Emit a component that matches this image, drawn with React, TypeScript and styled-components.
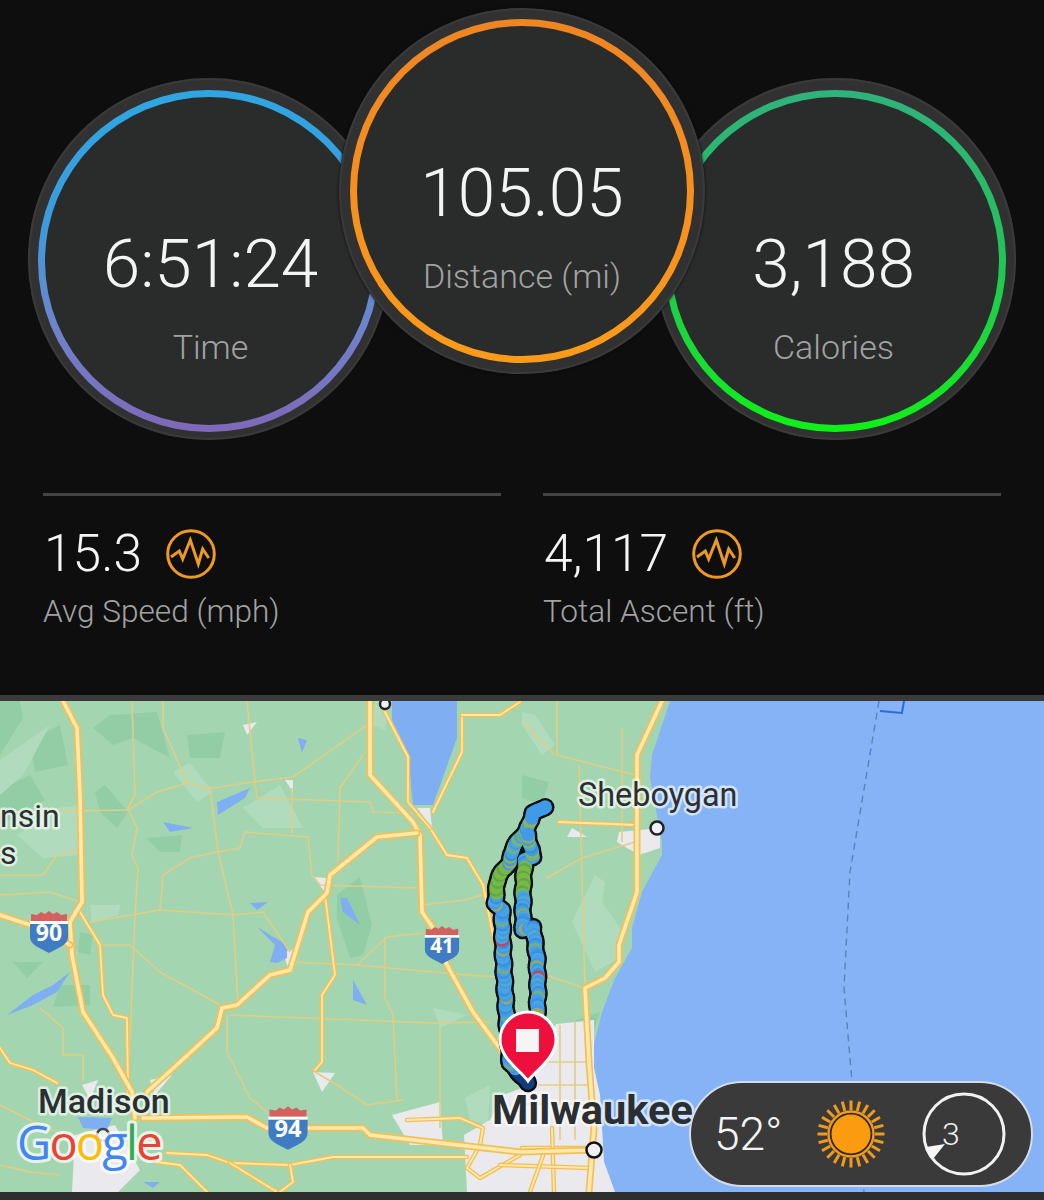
import React from 'react'
import styled, {createGlobalStyle} from 'styled-components'

const GlobalStyle = createGlobalStyle`
  html, body {
    margin: 0;
    background: #0e0e0e;
  }
  body {
    font-family: Roboto, "Liberation Sans", sans-serif;
  }
`

const Page = styled.div`
  width: 1044px;
  height: 1200px;
  background: #0e0e0e;
  display: flex;
  flex-direction: column;
  overflow: hidden;
`

const Summary = styled.section`
  height: 695px;
  flex: none;
`

const Gauges = styled.div`
  display: flex;
  align-items: flex-start;
  padding: 8px 0 0 28px;
`

const Gauge = styled.div<{$main?: boolean}>`
  width: ${p => (p.$main ? 366 : 362)}px;
  height: ${p => (p.$main ? 366 : 362)}px;
  box-sizing: border-box;
  flex: none;
  padding: ${p => (p.$main ? '11px' : '12px 10px 8px')};
  border-radius: 50%;
  background: #313131;
  position: relative;
  z-index: ${p => (p.$main ? 2 : 1)};
  margin: ${p => (p.$main ? '0 -51px' : '70px 0 0')};
  box-shadow: inset 0 0 0 2px #3a3a3a${p => (p.$main ? ', 0 0 3px #0a0a0a' : '')};
`

const Ring = styled.div<{$colors: string}>`
  height: 100%;
  box-sizing: border-box;
  padding: 7px;
  border-radius: 50%;
  background: linear-gradient(180deg, ${p => p.$colors});
`

const Face = styled.div<{$main?: boolean; $nudge?: number}>`
  height: 100%;
  box-sizing: border-box;
  border-radius: 50%;
  background: #2a2b2b;
  display: flex;
  flex-direction: column;
  align-items: center;
  justify-content: center;
  padding-top: ${p => (p.$main ? 66 : 68)}px;
  padding-left: ${p => Math.max(p.$nudge || 0, 0)}px;
  padding-right: ${p => Math.max(-(p.$nudge || 0), 0)}px;
`

const GaugeValue = styled.div`
  font-size: 67.5px;
  line-height: 82px;
  font-weight: 300;
  color: #f4f4f4;
`

const GaugeLabel = styled.div`
  font-size: 34px;
  line-height: 42px;
  margin-top: 21px;
  font-weight: 300;
  color: #a2a2a2;
`

const Stats = styled.div`
  display: grid;
  grid-template-columns: 458px 458px;
  column-gap: 42px;
  margin: 53px 0 0 43px;
`

const Stat = styled.div`
  border-top: 3px solid #444;
  padding-top: 29px;
`

const StatTop = styled.div`
  display: flex;
  align-items: center;
  gap: 24px;
  padding-left: 1px;
  height: 60px;
  margin-top: -1px;
`

const StatValue = styled.div`
  font-size: 51.5px;
  line-height: 60px;
  font-weight: 300;
  color: #f4f4f4;
`

const StatLabel = styled.div`
  font-size: 31.6px;
  line-height: 38px;
  margin-top: 9px;
  font-weight: 300;
  color: #a2a2a2;
`

const MapFrame = styled.section`
  position: relative;
  flex: none;
  height: 491px;
  border-top: 6px solid #3a3a3a;
  border-bottom: 8px solid #2e2e2e;
`

const MapCanvas = styled.svg`
  display: block;
  width: 1044px;
  height: 491px;
`

const PlaceName = styled.text<{$size: number; $weight: number}>`
  font-family: Roboto, "Liberation Sans", sans-serif;
  font-size: ${p => p.$size}px;
  font-weight: ${p => p.$weight};
  fill: #2b2f33;
  stroke: rgba(255, 255, 255, 0.65);
  stroke-width: 5px;
  stroke-linejoin: round;
  paint-order: stroke;
`

const ShieldNumber = styled.text`
  font-family: "Open Sans", Roboto, sans-serif;
  font-size: 23px;
  font-weight: 700;
  fill: #fff;
  text-anchor: middle;
`

const GoogleMark = styled.text`
  font-family: "Open Sans", Roboto, sans-serif;
  font-size: 47px;
  font-weight: 500;
  letter-spacing: -1.8px;
  stroke: rgba(255, 255, 255, 0.75);
  stroke-width: 6px;
  stroke-linejoin: round;
  paint-order: stroke;
`

const Weather = styled.div`
  position: absolute;
  left: 689px;
  top: 380px;
  width: 344px;
  height: 106px;
  box-sizing: border-box;
  display: flex;
  align-items: center;
  padding: 0 23px;
  background: #3a3a3a;
  border: 2px solid #d5dce6;
  border-radius: 53px;
`

const Temperature = styled.div`
  width: 103px;
  font-size: 46px;
  line-height: 54px;
  font-weight: 300;
  color: #f4f4f4;
`

const Wind = styled.div`
  position: relative;
  margin-left: 37px;
  width: 84px;
  height: 84px;
`

const WindSpeed = styled.span`
  position: absolute;
  left: 20px;
  top: 23px;
  font-size: 32px;
  line-height: 38px;
  font-weight: 300;
  color: #f0f0f0;
`

type Pt = [number, number]

const pts = (list: Pt[]) => list.map(p => p.join(',')).join(' ')

const coast: Pt[] = [
  [670, 701], [652, 755], [650, 778], [662, 842], [662, 855], [642, 892], [632, 928], [632, 948],
  [615, 978], [602, 1012], [594, 1045], [594, 1068], [600, 1095], [604, 1162], [615, 1192], [1044, 1192], [1044, 701],
]

const lakes: Pt[][] = [
  [[392, 701], [457, 701], [457, 738], [433, 805], [413, 805], [408, 755], [392, 720]],
  [[217, 802], [250, 788], [245, 798], [218, 815]],
  [[163, 822], [193, 828], [170, 832]],
  [[298, 738], [307, 740], [302, 753]],
  [[250, 903], [268, 902], [257, 910]],
  [[257, 927], [287, 945], [287, 958], [277, 963], [270, 962], [275, 945]],
  [[340, 898], [347, 898], [360, 925], [343, 912]],
  [[353, 980], [367, 1005], [353, 1000]],
  [[7, 1015], [33, 995], [53, 985], [70, 972], [57, 992], [33, 1005]],
  [[78, 1117], [112, 1118], [107, 1130], [83, 1128]],
  [[143, 1182], [160, 1182], [153, 1188]],
]

const forest: Pt[][] = [
  [[93, 728], [110, 715], [157, 712], [170, 758], [133, 738], [113, 745]],
  [[95, 792], [105, 785], [128, 812], [117, 828], [100, 812]],
  [[187, 735], [225, 732], [220, 758], [190, 758]],
  [[147, 838], [182, 835], [180, 852], [160, 852]],
  [[337, 895], [360, 877], [372, 925], [363, 955], [350, 958], [337, 918]],
  [[0, 701], [20, 701], [23, 718], [0, 755]],
  [[30, 740], [60, 725], [68, 765], [35, 772]],
  [[0, 790], [30, 775], [45, 800], [0, 825]],
  [[13, 962], [43, 962], [27, 978]],
  [[80, 932], [93, 935], [90, 955], [78, 952]],
  [[60, 985], [90, 985], [90, 1005], [53, 1007]],
  [[522, 775], [549, 782], [542, 805], [522, 798]],
  [[576, 1020], [600, 1012], [590, 1040], [574, 1042]],
]

const meadow: Pt[][] = [
  [[0, 760], [50, 725], [23, 775], [0, 795]],
  [[243, 808], [280, 785], [303, 828], [263, 828]],
  [[173, 772], [190, 763], [213, 792], [197, 802]],
  [[57, 808], [80, 805], [80, 855], [43, 858], [17, 835]],
  [[433, 1008], [467, 1015], [440, 1028]],
  [[522, 712], [535, 715], [555, 745], [542, 755], [522, 725]],
  [[595, 875], [605, 882], [602, 902], [625, 935], [619, 958], [595, 972], [572, 922]],
  [[90, 905], [120, 905], [118, 915], [92, 922]],
  [[375, 701], [388, 701], [385, 730], [372, 725]],
  [[465, 1098], [490, 1085], [488, 1125], [470, 1120]],
]

const urban: Pt[][] = [
  [[392, 1115], [440, 1102], [443, 1145], [410, 1145]],
  [[75, 1135], [115, 1125], [140, 1170], [118, 1192], [72, 1192]],
  [[313, 1072], [335, 1073], [322, 1092]],
  [[243, 725], [257, 722], [247, 735]],
  [[285, 780], [293, 780], [293, 792]],
  [[313, 877], [327, 878], [325, 892]],
  [[283, 952], [293, 950], [288, 968]],
  [[417, 808], [430, 808], [432, 828]],
  [[619, 832], [660, 828], [660, 848], [639, 855], [617, 842]],
  [[567, 837], [572, 828], [587, 837]],
  [[503, 1095], [530, 1085], [542, 1050], [556, 1024], [594, 1020], [594, 1068], [600, 1095], [604, 1162], [615, 1192], [467, 1192], [464, 1135], [490, 1120]],
  [[82, 1085], [98, 1080], [90, 1100]],
  [[150, 1080], [172, 1075], [155, 1095]],
]

const highways: Pt[][] = [
  [[63, 701], [77, 728], [80, 795], [82, 902], [70, 922], [72, 955], [83, 1012], [113, 1058], [132, 1092], [135, 1118]],
  [[0, 915], [30, 925], [70, 945]],
  [[143, 1118], [247, 1117], [267, 1128], [363, 1128], [370, 1135], [520, 1152], [594, 1150]],
  [[370, 701], [370, 775], [413, 822], [420, 835], [422, 912], [433, 928], [447, 965], [473, 1012], [507, 1058]],
  [[147, 1092], [180, 1062], [217, 1028], [222, 1008], [237, 1005], [270, 975], [290, 970], [308, 912], [327, 893], [330, 875], [377, 837], [417, 833]],
  [[662, 701], [637, 755], [637, 892], [619, 945], [619, 962], [605, 978], [585, 988], [589, 1062], [594, 1128], [589, 1192]],
]

const majorRoads: Pt[][] = [
  [[325, 895], [335, 975], [322, 995], [322, 1062], [315, 1070]],
  [[80, 912], [100, 945], [103, 995], [113, 1015], [127, 1018], [128, 1092]],
  [[0, 1048], [10, 1063], [33, 1070], [57, 1083]],
  [[157, 1162], [180, 1165], [207, 1192]],
  [[430, 828], [447, 855], [467, 858], [483, 885], [495, 945]],
  [[385, 712], [408, 757], [408, 802], [430, 828]],
  [[462, 715], [462, 752], [433, 812]],
  [[462, 715], [500, 715], [520, 702]],
  [[167, 1153], [207, 1155], [230, 1163], [290, 1165], [333, 1157], [467, 1157]],
  [[230, 1163], [277, 1192]],
  [[290, 1165], [293, 1182], [280, 1192]],
  [[407, 1120], [460, 1118], [483, 1128], [480, 1145], [467, 1168], [480, 1178], [520, 1155]],
  [[559, 822], [637, 825]],
  [[522, 1148], [594, 1148]],
  [[552, 1128], [554, 1192]],
  [[500, 1165], [590, 1168]],
  [[530, 1192], [545, 1150]],
]

const lanes: Pt[][] = [
  [[132, 701], [135, 795], [128, 808], [137, 828], [132, 855], [138, 868], [135, 915], [128, 1085]],
  [[0, 812], [128, 810], [157, 792], [187, 783], [213, 788], [253, 782], [293, 777], [367, 725]],
  [[163, 701], [163, 728], [187, 782]],
  [[247, 701], [255, 782], [257, 798], [370, 802], [373, 812], [413, 813]],
  [[210, 788], [218, 852], [233, 915], [238, 1005]],
  [[90, 922], [160, 910], [233, 915], [263, 912], [290, 952]],
  [[160, 910], [163, 875], [190, 858], [217, 852], [240, 848], [245, 832], [308, 837], [312, 875], [320, 885], [417, 888]],
  [[292, 788], [292, 833]],
  [[340, 785], [338, 862]],
  [[363, 755], [340, 788]],
  [[100, 945], [130, 945], [160, 972], [220, 1005]],
  [[230, 1015], [433, 1023], [490, 1022]],
  [[293, 962], [357, 965], [387, 937], [423, 933]],
  [[357, 965], [467, 975], [500, 977]],
  [[385, 937], [385, 998], [393, 1015], [397, 1102]],
  [[227, 1015], [227, 1052], [250, 1098], [267, 1112]],
  [[315, 1072], [337, 1085], [367, 1105], [403, 1100]],
  [[440, 1028], [440, 1128]],
  [[0, 895], [50, 892], [80, 902]],
  [[40, 1008], [63, 1028], [63, 1055], [83, 1055], [83, 1082]],
  [[0, 875], [43, 875], [57, 855], [77, 850]],
  [[422, 905], [465, 900], [482, 895]],
  [[557, 701], [557, 755], [635, 775]],
  [[579, 765], [585, 988]],
  [[622, 728], [622, 842]],
  [[547, 878], [582, 858], [635, 842]],
  [[522, 722], [555, 755]],
  [[545, 975], [585, 988]],
  [[560, 1025], [560, 1140]],
  [[575, 1022], [575, 1140]],
  [[545, 1062], [592, 1062]],
  [[538, 1085], [592, 1085]],
  [[520, 1104], [596, 1104]],
  [[0, 1105], [40, 1125], [75, 1140]],
  [[0, 1165], [30, 1172], [60, 1175]],
]

const westTrail: Pt[] = [
  [528, 1083], [510, 1063], [507, 1023], [505, 990], [503, 950], [502, 910], [495, 903], [498, 877], [510, 862],
  [513, 847], [527, 830], [533, 813], [547, 806],
]

const eastTrail: Pt[] = [
  [533, 857], [525, 860], [523, 887], [523, 930], [533, 927], [537, 957], [538, 990], [537, 1017],
]

const linkTrail: Pt[] = [[533, 857], [527, 832]]

const trailColors = ['#3f9be8', '#4aa5e0', '#3890e0', '#45a0e8', '#4aa5e0', '#3f9be8', '#5aa8c8', '#3f9be8', '#4aa5e0', '#3890e0', '#45a0e8', '#7fae6a', '#4aa5e0', '#3f9be8', '#3890e0', '#4aa5e0', '#45a0e8', '#3f9be8', '#9aa860']

// walks a polyline and drops a dot every few pixels, the way the app paints a track
const sampleTrail = (line: Pt[], step: number) => {
  const out: Pt[] = []
  for (let i = 0; i < line.length - 1; i++) {
    const [ax, ay] = line[i]
    const [bx, by] = line[i + 1]
    const n = Math.max(1, Math.round(Math.hypot(bx - ax, by - ay) / step))
    for (let k = 0; k < n; k++) out.push([ax + ((bx - ax) * k) / n, ay + ((by - ay) * k) / n])
  }
  return out
}

const dotColor = (y: number, i: number) => {
  if (y > 1070) return '#123c7a'
  if (y < 818) return '#3f9be8'
  if (y > 865 && y < 895) return i % 3 ? '#7cb83c' : '#58a858'
  if (y < 860 && i % 4 === 0) return '#7cb85c'
  if (i % 61 === 60) return '#c8425a'
  return trailColors[i % trailColors.length]
}

// small repeatable wobble so the track edge stays lumpy like the GPS trace
const wobble = (i: number) => Math.sin(i * 0.9) * 0.7

const trailDots = [westTrail, eastTrail, linkTrail].flatMap((line, l) =>
  sampleTrail(line, 2.5).map(([x, y], i): {x: number; y: number; fill: string} => ({
    x: x + wobble(i + l * 3),
    y,
    fill: dotColor(y, i + l * 5),
  })),
)

const Track = () => (
  <g>
    {trailDots.map((d, i) => <circle key={i} cx={d.x} cy={d.y} r={9.2} fill='#0b0f14' />)}
    {trailDots.map((d, i) => <circle key={i} cx={d.x} cy={d.y} r={6.8} fill={d.fill} />)}
  </g>
)

const Road = ({line, edge, core}: {line: Pt[]; edge: number; core: number}) => (
  <g fill='none' strokeLinejoin='round' strokeLinecap='round'>
    <polyline points={pts(line)} stroke='#f4bf55' strokeWidth={edge} />
    <polyline points={pts(line)} stroke='#fde9ac' strokeWidth={core} />
  </g>
)

const Shield = ({x, y, scale, label}: {x: number; y: number; scale: number; label: string}) => (
  <g transform={`translate(${x} ${y}) scale(${scale})`}>
    <path d='M-18 -11V-18L-12 -17L-8 -20L-4 -18L0 -21L4 -18L8 -20L12 -17L18 -18V-11Z' fill='#d4615f' />
    <rect x={-19} y={-11} width={38} height={3} fill='#fff' />
    <path d='M-19 -8H19V5C19 13 9 16 0 21C-9 16 -19 13 -19 5Z' fill='#3f7cc4' />
    <ShieldNumber x={0} y={9}>{label}</ShieldNumber>
  </g>
)

const CityDot = ({x, y, r, ring}: {x: number; y: number; r: number; ring: string}) => (
  <circle cx={x} cy={y} r={r} fill='#eef0f4' stroke={ring} strokeWidth={2.5} />
)

const Pin = () => (
  <g>
    <path d='M528 1081C522 1072 500 1058 500 1040A28 28 0 0 1 556 1040C556 1058 534 1072 528 1081Z' fill='#ee0f3c' stroke='#fff' strokeWidth={3} />
    <rect x={516} y={1029} width={23} height={23} fill='#f6f4f4' />
  </g>
)

const MapArt = () => (
  <MapCanvas viewBox='0 701 1044 491'>
    <rect x={0} y={701} width={1044} height={491} fill='#a3d6b0' />
    {forest.map((p, i) => <polygon key={i} points={pts(p)} fill='#93cda6' />)}
    {meadow.map((p, i) => <polygon key={i} points={pts(p)} fill='#b0dcbd' />)}
    <polygon points={pts(coast)} fill='#86b3f5' />
    {urban.map((p, i) => <polygon key={i} points={pts(p)} fill='#e9e9ee' />)}
    {lakes.map((p, i) => <polygon key={i} points={pts(p)} fill='#80aef2' />)}
    {lanes.map((line, i) => (
      <polyline key={i} points={pts(line)} fill='none' stroke='#e2cd83' strokeWidth={1.6} strokeLinejoin='round' />
    ))}
    {majorRoads.map((line, i) => <Road key={i} line={line} edge={4.5} core={1.8} />)}
    {highways.map((line, i) => <Road key={i} line={line} edge={7} core={3.6} />)}
    <polyline points='879,701 850,872 844,988 852,1082 864,1192' fill='none' stroke='#5c80b8' strokeWidth={1.4} strokeDasharray='7 5' />
    <polyline points='880,711 902,713 904,701' fill='none' stroke='#2a6cd0' strokeWidth={2} />
    <CityDot x={385} y={704} r={5} ring='#222' />
    <CityDot x={657} y={828} r={6.5} ring='#222' />
    <CityDot x={594} y={1150} r={7.5} ring='#111' />
    <CityDot x={103} y={1135} r={6} ring='#444' />
    <Shield x={49} y={932} scale={1} label='90' />
    <Shield x={442} y={945} scale={0.9} label='41' />
    <Shield x={288} y={1128} scale={1.03} label='94' />
    <Track />
    <Pin />
    <PlaceName x={0} y={827} $size={32} $weight={400}>nsin</PlaceName>
    <PlaceName x={0} y={864} $size={32} $weight={400}>s</PlaceName>
    <PlaceName x={578} y={806} $size={32.4} $weight={400}>Sheboygan</PlaceName>
    <PlaceName x={38} y={1113} $size={34} $weight={500}>Madison</PlaceName>
    <PlaceName x={492} y={1124} $size={41.5} $weight={700}>Milwaukee</PlaceName>
    <GoogleMark x={17} y={1160}>
      <tspan fill='#4285f4'>G</tspan>
      <tspan fill='#ea4335'>o</tspan>
      <tspan fill='#fbbc05'>o</tspan>
      <tspan fill='#4285f4'>g</tspan>
      <tspan fill='#34a853'>l</tspan>
      <tspan fill='#ea4335'>e</tspan>
    </GoogleMark>
  </MapCanvas>
)

const PulseIcon = () => (
  <svg width={50} height={50} viewBox='0 0 50 50'>
    <circle cx={25} cy={25} r={23.3} fill='none' stroke='#ee9a22' strokeWidth={3} />
    <polyline points='5,28 13.3,22 16.7,30 24.3,11 32.3,35 36.7,20 42.7,29' fill='none' stroke='#ee9a22' strokeWidth={3} strokeLinejoin='miter' />
  </svg>
)

const rayAngles = Array.from({length: 24}, (_, i) => (i * 360) / 24)

const SunIcon = () => (
  <svg width={68} height={68} viewBox='-34 -34 68 68'>
    {rayAngles.map(a => (
      <line key={a} x1={0} y1={-24} x2={0} y2={-33.5} stroke='#f09a20' strokeWidth={3} transform={`rotate(${a})`} />
    ))}
    <circle r={22.5} fill='#2f2b26' stroke='#f09a20' strokeWidth={2.4} />
    <circle r={19.5} fill='#fb9c10' />
  </svg>
)

const WindDial = () => (
  <svg width={84} height={84} viewBox='0 0 84 84'>
    <circle cx={42} cy={42} r={40} fill='none' stroke='#f2f2f2' strokeWidth={3} />
    <polygon points='23,52 4,55 11,67' fill='#f6f6f6' />
  </svg>
)

const App = () => (
  <Page>
    <GlobalStyle />
    <Summary>
      <Gauges>
        <Gauge>
          <Ring $colors='#2ea6e2 0%, #3d9bdc 40%, #6c85cc 68%, #7f68b8 100%'>
            <Face $nudge={3}>
              <GaugeValue>6:51:24</GaugeValue>
              <GaugeLabel>Time</GaugeLabel>
            </Face>
          </Ring>
        </Gauge>
        <Gauge $main>
          <Ring $colors='#ee8524 0%, #f58f20 50%, #fb9b1a 100%'>
            <Face $main>
              <GaugeValue>105.05</GaugeValue>
              <GaugeLabel>Distance (mi)</GaugeLabel>
            </Face>
          </Ring>
        </Gauge>
        <Gauge>
          <Ring $colors='#2fb27c 0%, #26c05c 45%, #0ff018 100%'>
            <Face $nudge={-3}>
              <GaugeValue>3,188</GaugeValue>
              <GaugeLabel>Calories</GaugeLabel>
            </Face>
          </Ring>
        </Gauge>
      </Gauges>
      <Stats>
        <Stat>
          <StatTop>
            <StatValue>15.3</StatValue>
            <PulseIcon />
          </StatTop>
          <StatLabel>Avg Speed (mph)</StatLabel>
        </Stat>
        <Stat>
          <StatTop>
            <StatValue>4,117</StatValue>
            <PulseIcon />
          </StatTop>
          <StatLabel>Total Ascent (ft)</StatLabel>
        </Stat>
      </Stats>
    </Summary>
    <MapFrame>
      <MapArt />
      <Weather>
        <Temperature>52°</Temperature>
        <SunIcon />
        <Wind>
          <WindDial />
          <WindSpeed>3</WindSpeed>
        </Wind>
      </Weather>
    </MapFrame>
  </Page>
)

export default App
